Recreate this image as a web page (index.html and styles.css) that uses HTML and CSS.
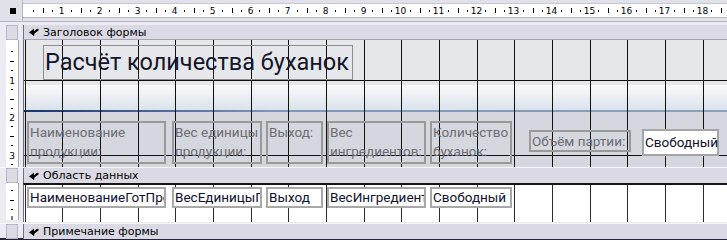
FILE: index.html
```html
<!DOCTYPE html>
<html lang="ru">
<head>
    <meta charset="UTF-8">
    <meta name="viewport" content="width=device-width, initial-scale=1.0">
    <title>Расчёт количества буханок</title>
    <link rel="stylesheet" href="styles.css">
</head>
<body>
    <div class="designer">
        <div class="ruler-row">
            <div class="corner"><span class="corner-dot"></span></div>
            <svg class="hruler" width="704" height="13">
                <defs>
                    <pattern id="hticks" x="1" y="0" width="113" height="13" patternUnits="userSpaceOnUse">
                        <rect x="9" y="6" width="1" height="2"/>
                        <rect x="19" y="4" width="1" height="5"/>
                        <rect x="28" y="6" width="1" height="2"/>
                        <rect x="47" y="6" width="1" height="2"/>
                        <rect x="57" y="4" width="1" height="5"/>
                        <rect x="66" y="6" width="1" height="2"/>
                        <rect x="85" y="6" width="1" height="2"/>
                        <rect x="95" y="4" width="1" height="5"/>
                        <rect x="104" y="6" width="1" height="2"/>
                    </pattern>
                </defs>
                <rect width="704" height="13" fill="url(#hticks)"/>
                <g class="rnum">
                    <text x="38.5" y="10">1</text>
                    <text x="76.5" y="10">2</text>
                    <text x="114.5" y="10">3</text>
                    <text x="151.5" y="10">4</text>
                    <text x="189.5" y="10">5</text>
                    <text x="227.5" y="10">6</text>
                    <text x="264.5" y="10">7</text>
                    <text x="302.5" y="10">8</text>
                    <text x="340.5" y="10">9</text>
                    <text x="377.5" y="10">10</text>
                    <text x="415.5" y="10">11</text>
                    <text x="453.5" y="10">12</text>
                    <text x="490.5" y="10">13</text>
                    <text x="528.5" y="10">14</text>
                    <text x="566.5" y="10">15</text>
                    <text x="603.5" y="10">16</text>
                    <text x="641.5" y="10">17</text>
                    <text x="679.5" y="10">18</text>
                </g>
            </svg>
        </div>

        <div class="row bar-row first">
            <div class="gutter"><span class="selector"></span></div>
            <div class="main bar">
                <svg class="bar-icon" width="10" height="8" viewBox="0 0 10 8"><path d="M0 4.5 L5 0.5 L5 3 L8.5 0.5 L10 2 L5.5 5.5 L5 8 Z"/></svg>
                Заголовок формы
            </div>
        </div>

        <div class="row">
            <div class="gutter">
                <svg class="vruler" width="12" height="127">
                    <rect x="5" y="11" width="2" height="1"/>
                    <rect x="4" y="21" width="4" height="1"/>
                    <rect x="5" y="30" width="2" height="1"/>
                    <rect x="5" y="49" width="2" height="1"/>
                    <rect x="4" y="59" width="4" height="1"/>
                    <rect x="5" y="68" width="2" height="1"/>
                    <rect x="5" y="86" width="2" height="1"/>
                    <rect x="4" y="96" width="4" height="1"/>
                    <rect x="5" y="105" width="2" height="1"/>
                    <rect x="5" y="124" width="2" height="1"/>
                    <g class="rnum">
                        <text x="6" y="43.5">1</text>
                        <text x="6" y="81">2</text>
                        <text x="6" y="118.5">3</text>
                    </g>
                </svg>
            </div>
            <div class="main form-header">
                <div class="title">Расчёт количества буханок</div>
                <div class="controls">
                    <div class="label c-name">Наименование продукции:</div>
                    <div class="label c-unit">Вес единицы продукции:</div>
                    <div class="label c-out">Выход:</div>
                    <div class="label c-ingr">Вес ингредиентов:</div>
                    <div class="label c-count">Количество буханок:</div>
                    <div class="label c-batch">Объём партии:</div>
                    <div class="textbox c-free">Свободный</div>
                </div>
            </div>
        </div>

        <div class="row bar-row">
            <div class="gutter"><span class="selector"></span></div>
            <div class="main bar">
                <svg class="bar-icon" width="10" height="8" viewBox="0 0 10 8"><path d="M0 4.5 L5 0.5 L5 3 L8.5 0.5 L10 2 L5.5 5.5 L5 8 Z"/></svg>
                Область данных
            </div>
        </div>

        <div class="row">
            <div class="gutter">
                <svg class="vruler" width="12" height="37">
                    <rect x="5" y="7" width="2" height="1"/>
                    <rect x="4" y="17" width="4" height="1"/>
                    <rect x="5" y="26" width="2" height="1"/>
                    <rect x="5.5" y="33" width="1" height="4"/>
                </svg>
            </div>
            <div class="main detail">
                <div class="field c-name">НаименованиеГотПродукции</div>
                <div class="field c-unit">ВесЕдиницыПродукции</div>
                <div class="field c-out">Выход</div>
                <div class="field c-ingr">ВесИнгредиентов</div>
                <div class="field c-count">Свободный</div>
            </div>
        </div>

        <div class="row bar-row last">
            <div class="gutter"><span class="selector"></span></div>
            <div class="main bar">
                <svg class="bar-icon" width="10" height="8" viewBox="0 0 10 8"><path d="M0 4.5 L5 0.5 L5 3 L8.5 0.5 L10 2 L5.5 5.5 L5 8 Z"/></svg>
                Примечание формы
            </div>
        </div>
    </div>
</body>
</html>
```

FILE: styles.css
```css
html, body {
    margin: 0;
    height: 100%;
}

body {
    background-color: #ecebf1;
    font-family: "DejaVu Sans", sans-serif;
    overflow: hidden;
}

.designer {
    width: 727px;
    height: 240px;
    display: flex;
    flex-direction: column;
    box-sizing: border-box;
    border-bottom: 2px solid #23233a;
}

/* rulers */

.ruler-row {
    display: flex;
    height: 21px;
    flex: none;
    background-color: #e1e1e9;
    border-bottom: 1px solid #b4b4c4;
    margin-bottom: 3px;
}

.corner {
    width: 22px;
    border-right: 1px solid #b4b4c4;
    display: flex;
    align-items: flex-start;
}

.corner-dot {
    width: 6px;
    height: 6px;
    margin: 8px 0 0 10px;
    background-color: #000;
}

.hruler {
    display: block;
    margin-top: 4px;
    background-color: #fff;
    box-shadow: 0 1px 0 #b8b8c8, 0 -1px 0 #c8c8d4;
}

.rnum text {
    font-family: "DejaVu Sans", sans-serif;
    font-size: 9px;
    text-anchor: middle;
}

.vruler {
    display: block;
    background-color: #fff;
    border-right: 1px solid #a9a9b9;
}

/* rows */

.row {
    display: flex;
    flex: none;
}

.gutter {
    width: 23px;
    flex: none;
    padding-left: 6px;
    box-sizing: border-box;
    display: flex;
}

.main {
    flex: 1;
    border-left: 1px solid #70707f;
}

.selector {
    width: 12px;
    background-color: #dcdbe4;
    border: 1px solid #b5b5c4;
    box-sizing: border-box;
}

.bar {
    height: 15px;
    box-sizing: border-box;
    background-color: #dbdae4;
    display: flex;
    align-items: center;
    padding-left: 5px;
    gap: 4px;
    font-size: 11px;
    color: #000;
}

.bar-row.first .bar {
    border-bottom: 1px solid #a4a4b4;
}

.bar-row {
    border-top: 1px solid #f7f7fa;
}

.bar-row.first {
    border-top: none;
}

.bar-row.last {
    margin-top: 1px;
}

.bar-icon {
    flex: none;
}

/* form header */

.form-header {
    height: 127px;
    box-sizing: border-box;
    padding: 5px 0 0 3px;
    display: flex;
    flex-direction: column;
    align-items: flex-start;
    background:
        linear-gradient(90deg, #111 0 1px, transparent 1px 38px, #111 38px 39px, transparent 39px 76px, #111 76px 77px, transparent 77px) 38px 0 / 113px 100% repeat-x,
        linear-gradient(#111, #111) 0 40px / 100% 1px no-repeat,
        linear-gradient(#111, #111) 0 115px / 100% 1px no-repeat,
        linear-gradient(90deg, #15336d, #7f96b8 35%, #8ca0bd) 0 70px / 100% 2px no-repeat,
        linear-gradient(#f9fafc, #dbe2ea) 0 45px / 100% 25px no-repeat,
        linear-gradient(#d5d7de, #d5d7de) 0 72px / 100% 100% no-repeat,
        #e6e7eb;
}

.title {
    width: 310px;
    height: 35px;
    box-sizing: border-box;
    margin-left: 16px;
    padding-left: 1px;
    border: 1px solid #8d8d8d;
    font-family: Roboto, sans-serif;
    font-size: 23.5px;
    line-height: 33px;
    color: #15152a;
    white-space: nowrap;
}

.controls {
    display: flex;
    align-items: flex-start;
    margin-top: 41px;
}

.label, .textbox, .field {
    box-sizing: border-box;
    border: 2px solid #999;
    padding: 0 1px;
    font-family: Roboto, sans-serif;
    font-size: 13.5px;
    line-height: 19px;
}

.label {
    height: 43px;
    color: #6c6c72;
}

.textbox {
    background-color: #fff;
    color: #101030;
    border-color: #a5a5a5;
}

.c-name { width: 139px; }
.c-unit { width: 90px; margin-left: 6px; }
.c-out { width: 57px; margin-left: 4px; }
.c-ingr { width: 99px; margin-left: 4px; }
.c-count { width: 82px; margin-left: 4px; }

.c-batch {
    width: 102px;
    height: 22px;
    margin: 9px 0 0 17px;
    line-height: 18px;
}

.c-free {
    width: 77px;
    height: 27px;
    margin: 8px 0 0 11px;
    line-height: 22px;
}

/* detail */

.detail {
    height: 39px;
    box-sizing: border-box;
    border-top: 2px solid #151515;
    padding: 2px 0 0 3px;
    display: flex;
    align-items: flex-start;
    background:
        linear-gradient(90deg, #2a2a2a 0 1px, transparent 1px 38px, #2a2a2a 38px 39px, transparent 39px 76px, #2a2a2a 76px 77px, transparent 77px) 38px 0 / 113px 100% repeat-x,
        #fff;
}

.field {
    height: 21px;
    background-color: #fff;
    border-color: #a8a8a8;
    color: #101030;
    line-height: 17px;
    white-space: nowrap;
    overflow: hidden;
}
```
